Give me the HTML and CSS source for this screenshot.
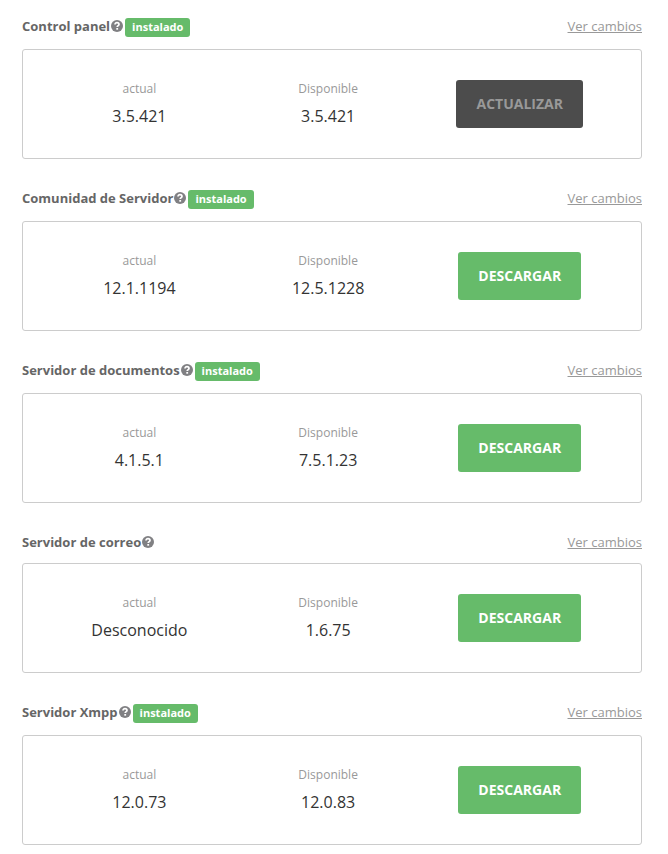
FILE: index.html
```
<!DOCTYPE html>
<html lang="es">
<head>
<meta charset="utf-8">
<meta name="viewport" content="width=device-width, initial-scale=1">
<title>Actualizaciones</title>
<link rel="stylesheet" href="styles.css">
</head>
<body>
<svg class="sprite" aria-hidden="true"><symbol id="help" viewBox="0 0 12 12"><circle cx="6" cy="6" r="6" fill="#808083"/><path d="M4 4.6C4 3.3 4.9 2.7 6 2.7S8 3.4 8 4.4C8 5.6 6.2 5.7 6.2 7.1" fill="none" stroke="#fff" stroke-width="1.7"/><rect x="5.3" y="8" width="1.8" height="1.7" fill="#fff"/></symbol></svg>
<main class="modules">
<section class="module">
<header class="head"><h2 class="title">Control panel</h2><svg class="help"><use href="#help"/></svg><span class="badge">instalado</span><a class="changes" href="#">Ver cambios</a></header>
<div class="card"><dl class="version"><dt>actual</dt><dd>3.5.421</dd></dl><dl class="version"><dt>Disponible</dt><dd>3.5.421</dd></dl><div class="action"><button class="button" type="button" disabled>ACTUALIZAR</button></div></div>
</section>
<section class="module">
<header class="head"><h2 class="title">Comunidad de Servidor</h2><svg class="help"><use href="#help"/></svg><span class="badge">instalado</span><a class="changes" href="#">Ver cambios</a></header>
<div class="card"><dl class="version"><dt>actual</dt><dd>12.1.1194</dd></dl><dl class="version"><dt>Disponible</dt><dd>12.5.1228</dd></dl><div class="action"><button class="button" type="button">DESCARGAR</button></div></div>
</section>
<section class="module">
<header class="head"><h2 class="title">Servidor de documentos</h2><svg class="help"><use href="#help"/></svg><span class="badge">instalado</span><a class="changes" href="#">Ver cambios</a></header>
<div class="card"><dl class="version"><dt>actual</dt><dd>4.1.5.1</dd></dl><dl class="version"><dt>Disponible</dt><dd>7.5.1.23</dd></dl><div class="action"><button class="button" type="button">DESCARGAR</button></div></div>
</section>
<section class="module compact">
<header class="head"><h2 class="title">Servidor de correo</h2><svg class="help"><use href="#help"/></svg><a class="changes" href="#">Ver cambios</a></header>
<div class="card"><dl class="version"><dt>actual</dt><dd>Desconocido</dd></dl><dl class="version"><dt>Disponible</dt><dd>1.6.75</dd></dl><div class="action"><button class="button" type="button">DESCARGAR</button></div></div>
</section>
<section class="module">
<header class="head"><h2 class="title">Servidor Xmpp</h2><svg class="help"><use href="#help"/></svg><span class="badge">instalado</span><a class="changes" href="#">Ver cambios</a></header>
<div class="card"><dl class="version"><dt>actual</dt><dd>12.0.73</dd></dl><dl class="version"><dt>Disponible</dt><dd>12.0.83</dd></dl><div class="action"><button class="button" type="button">DESCARGAR</button></div></div>
</section>
</main>
</body>
</html>
```
FILE: styles.css
```
* { box-sizing: border-box; }
body { margin: 0; background: #fff; color: #333; font-family: "Open Sans", sans-serif; }
.sprite { position: absolute; width: 0; height: 0; }
.modules { padding: 17px 26px 9px 22px; display: grid; gap: 30px; }
.head { display: flex; align-items: flex-start; height: 20px; margin-bottom: 12px; }
.compact .head { margin-bottom: 10px; }
.title { margin: 0; font-size: 13px; line-height: 18px; font-weight: 700; color: #666; }
.help { width: 12px; height: 12px; margin: 3px 2px 0 1px; }
.badge { margin-top: 1px; padding: 0 7px; border-radius: 3px; background: #66bb6a; color: #fff; font-size: 11px; line-height: 18px; height: 19px; font-weight: 700; }
.changes { margin-left: auto; font-size: 13px; line-height: 18px; color: #999; }
.card { display: grid; grid-template-columns: 33% 33% 34%; align-items: center; min-height: 110px; padding: 0 24px 0 22px; border: 1px solid #ccc; border-radius: 3px; }
.version { margin: 0; text-align: center; }
.version dt { font-size: 12px; line-height: 18px; color: #999; }
.version dd { margin: 6px 0 0; font-size: 16px; line-height: 24px; }
.action { text-align: center; }
.button { height: 48px; padding: 0 20px; border: 0; border-radius: 3px; background: #66bb6a; color: #fff; font: 700 14px/20px "Open Sans", sans-serif; cursor: pointer; }
.button:disabled { background: #4c4c4c; color: #999; cursor: default; }
```
